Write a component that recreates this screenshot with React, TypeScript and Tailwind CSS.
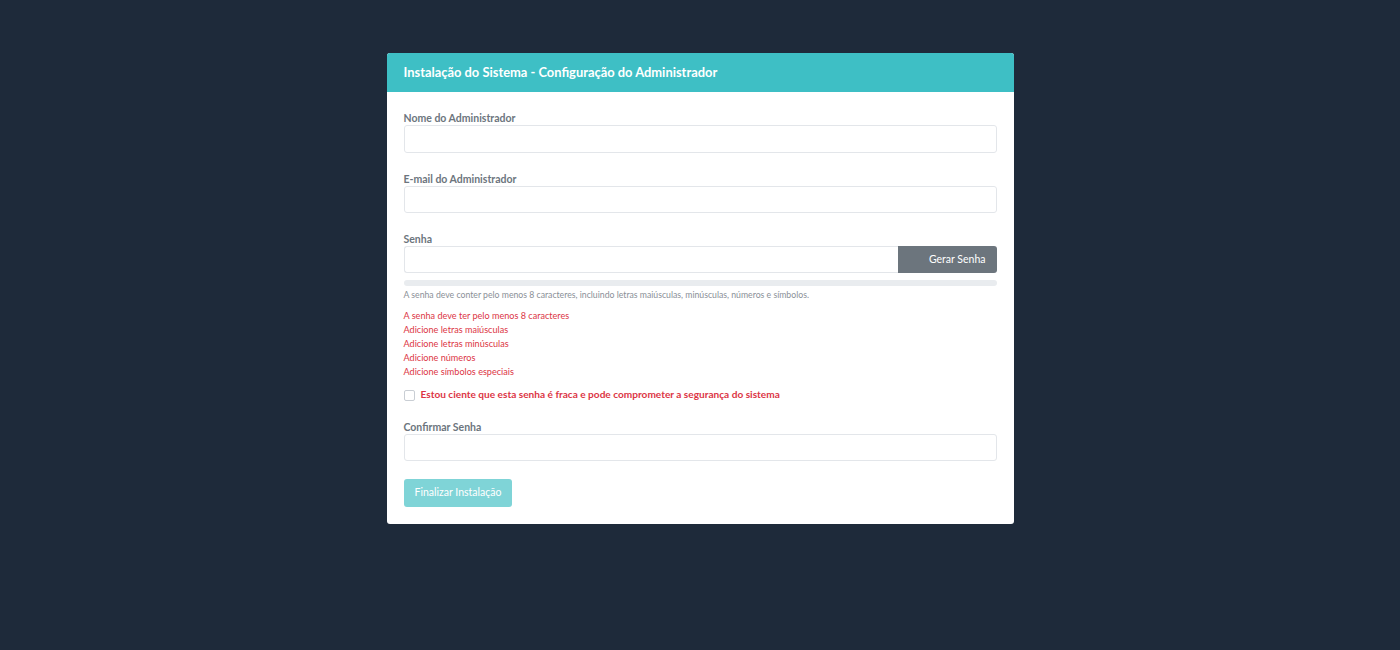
import { useState } from "react";

const rules = [
  "A senha deve ter pelo menos 8 caracteres",
  "Adicione letras maiúsculas",
  "Adicione letras minúsculas",
  "Adicione números",
  "Adicione símbolos especiais",
];

const labelCls = "block text-[10.5px] font-bold text-[#6c757d] leading-[14px]";
const inputCls =
  "block w-full rounded-[3px] border border-[#e3e6ea] bg-white px-2 text-[11px] outline-none";

const Field = ({ label, type = "text", h }: { label: string; type?: string; h: string }) => (
  <div className="mb-[19px]">
    <label className={labelCls}>{label}</label>
    <input type={type} className={`${inputCls} ${h}`} />
  </div>
);

const App = () => {
  const [aware, setAware] = useState(false);

  return (
    <div
      className="min-h-[650px] w-full bg-[#1e2a3a] flex justify-center pt-[53px]"
      style={{ fontFamily: "Lato, 'Open Sans', sans-serif" }}
    >
      <div className="w-[627px] h-fit bg-white rounded-[3px] overflow-hidden">
        <div className="h-[39px] bg-[#3ebfc5] flex items-center px-[17px]">
          <h1 className="text-[12.9px] font-bold text-white">
            Instalação do Sistema - Configuração do Administrador
          </h1>
        </div>

        <div className="px-[17px] pt-[19px] pb-[17px]">
          <Field label="Nome do Administrador" h="h-[28px]" />
          <Field label="E-mail do Administrador" type="email" h="h-[27px]" />

          <div>
            <label className={labelCls}>Senha</label>
            <div className="flex h-[27px]">
              <input
                type="password"
                className="flex-1 h-full rounded-l-[3px] border border-r-0 border-[#e3e6ea] px-2 text-[11px] outline-none"
              />
              <button className="w-[99px] h-full bg-[#6c757d] text-white text-[10.5px] rounded-r-[3px] text-right pr-[11px]">
                Gerar Senha
              </button>
            </div>
            <div className="mt-[7px] h-[6px] rounded-full bg-[#e9ecef]" />
            <p className="mt-[3px] text-[8.7px] text-[#8a9097] leading-[12px]">
              A senha deve conter pelo menos 8 caracteres, incluindo letras maiúsculas, minúsculas, números e símbolos.
            </p>
            <ul className="mt-[8px] text-[9.1px] text-[#dc3545] leading-[14px]">
              {rules.map((r) => (
                <li key={r}>{r}</li>
              ))}
            </ul>
            <label className="mt-[9px] h-[14px] flex items-center gap-[6px] cursor-pointer">
              <input
                type="checkbox"
                checked={aware}
                onChange={(e) => setAware(e.target.checked)}
                className="w-[11px] h-[11px] appearance-none rounded-[2px] border border-[#c9ced4] bg-white"
              />
              <span className="text-[10.1px] font-bold text-[#dc3545]">
                Estou ciente que esta senha é fraca e pode comprometer a segurança do sistema
              </span>
            </label>
          </div>

          <div className="mt-[18px] mb-[17px]">
            <label className={labelCls}>Confirmar Senha</label>
            <input type="password" className={`${inputCls} h-[27px]`} />
          </div>

          <button
            disabled
            className="h-[28px] px-[11px] rounded-[3px] bg-[#7fd4d7] text-white text-[10.5px]"
          >
            Finalizar Instalação
          </button>
        </div>
      </div>
    </div>
  );
};

export default App;
